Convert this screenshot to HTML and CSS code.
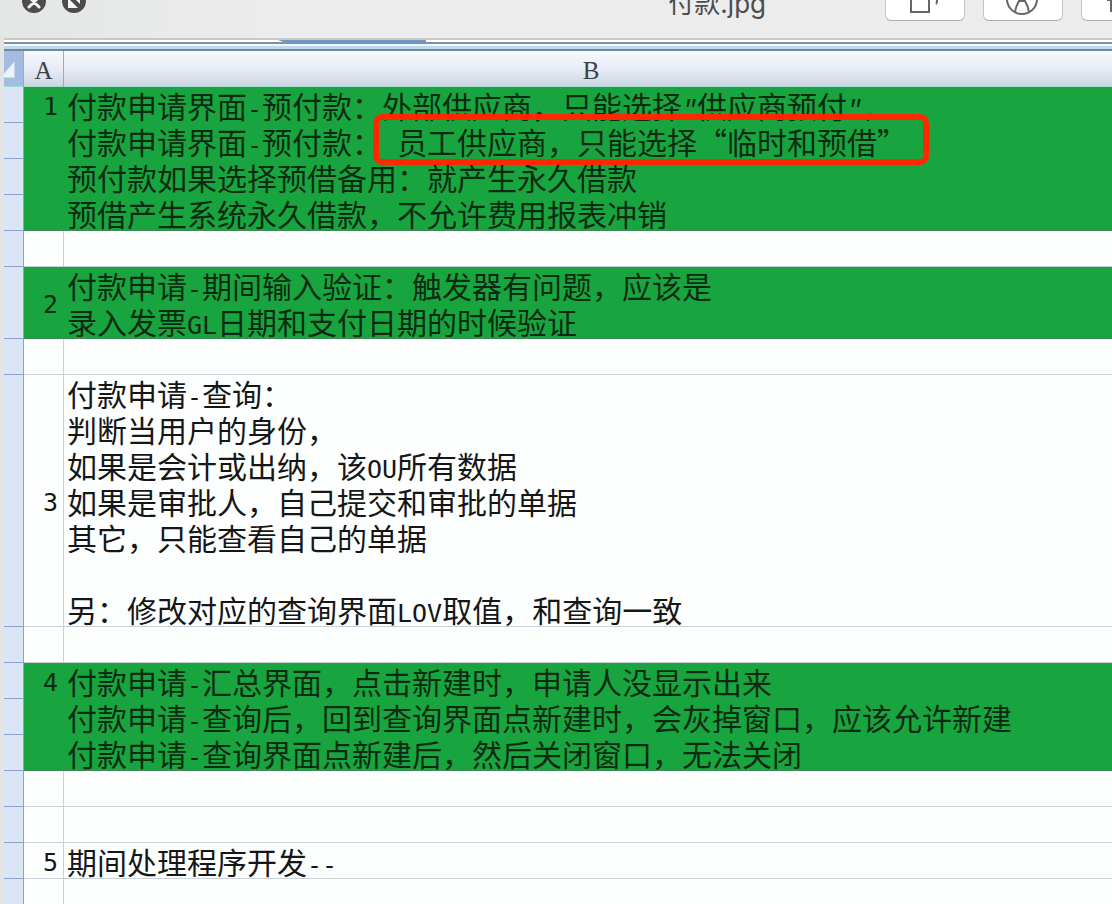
FILE: index.html
```html
<!DOCTYPE html>
<html lang="zh-CN">
<head>
<meta charset="utf-8">
<title>付款.jpg</title>
<link rel="stylesheet" href="styles.css">
</head>
<body>
<header class="toolbar">
  <div class="window-controls">
    <button class="round" aria-label="关闭"><svg viewBox="0 0 24 24"><circle cx="12" cy="12" r="12" fill="#4c4c4c"/><path d="M7 8l10 10M17 8L7 18" stroke="#f4f4f4" stroke-width="3" stroke-linecap="round"/></svg></button>
    <button class="round" aria-label="全屏"><svg viewBox="0 0 24 24"><circle cx="12" cy="12" r="12" fill="#4c4c4c"/><path d="M9 6h9v9zM6 9v10h10z" fill="#f4f4f4"/></svg></button>
  </div>
  <h1 class="title">付款.jpg</h1>
  <div class="tools">
    <button class="tool" aria-label="旋转"><svg viewBox="0 0 40 32"><path d="M6 6h18v19H6z M26 5h3q3 0 3 3v6q0 2-1 3" fill="none" stroke="#666" stroke-width="2"/></svg></button>
    <button class="tool" aria-label="标记"><svg viewBox="0 0 40 32"><circle cx="19" cy="12" r="15" fill="none" stroke="#666" stroke-width="2"/><path d="M12 25q1-6 4-11h6q3 5 4 11M16 14l3-9 3 9" fill="none" stroke="#666" stroke-width="2"/></svg></button>
    <button class="tool" aria-label="共享"><svg viewBox="0 0 40 32"><path d="M6 13h4v11h20V13" fill="none" stroke="#666" stroke-width="2"/></svg></button>
  </div>
</header>
<main class="sheet">
  <div class="ribbon"><span class="tab"></span></div>
  <table class="grid">
    <colgroup><col class="col-head"><col class="col-a"><col></colgroup>
    <thead>
      <tr><th class="corner"><svg viewBox="0 0 20 36"><path d="M11 10v17H0v-4z" fill="#eef3fb"/></svg></th><th>A</th><th>B</th></tr>
    </thead>
    <tbody>
      <tr class="green"><th></th><td>1</td><td>付款申请界面<i>-</i>预付款：外部供应商，只能选择<i class="slant">"</i>供应商预付<i class="slant">"</i><i>,</i></td></tr>
      <tr class="green"><th></th><td></td><td>付款申请界面<i>-</i>预付款：<i> </i><span class="marked">员工供应商，只能选择“临时和预借”</span></td></tr>
      <tr class="green"><th></th><td></td><td>预付款如果选择预借备用：就产生永久借款</td></tr>
      <tr class="green last"><th></th><td></td><td>预借产生系统永久借款，不允许费用报表冲销</td></tr>
      <tr><th></th><td></td><td></td></tr>
      <tr class="green last"><th></th><td>2</td><td>付款申请<i>-</i>期间输入验证：触发器有问题，应该是<br>录入发票<i>GL</i>日期和支付日期的时候验证</td></tr>
      <tr><th></th><td></td><td></td></tr>
      <tr><th></th><td>3</td><td>付款申请<i>-</i>查询：<br>判断当用户的身份，<br>如果是会计或出纳，该<i>OU</i>所有数据<br>如果是审批人，自己提交和审批的单据<br>其它，只能查看自己的单据<br><br>另：修改对应的查询界面<i>LOV</i>取值，和查询一致</td></tr>
      <tr><th></th><td></td><td></td></tr>
      <tr class="green"><th></th><td>4</td><td>付款申请<i>-</i>汇总界面，点击新建时，申请人没显示出来</td></tr>
      <tr class="green"><th></th><td></td><td>付款申请<i>-</i>查询后，回到查询界面点新建时，会灰掉窗口，应该允许新建</td></tr>
      <tr class="green last"><th></th><td></td><td>付款申请<i>-</i>查询界面点新建后，然后关闭窗口，无法关闭</td></tr>
      <tr><th></th><td></td><td></td></tr>
      <tr><th></th><td></td><td></td></tr>
      <tr><th></th><td>5</td><td>期间处理程序开发<i>--</i></td></tr>
      <tr><th></th><td></td><td></td></tr>
    </tbody>
  </table>
</main>
</body>
</html>
```
FILE: styles.css
```css
* { box-sizing: border-box; }
body {
  margin: 0;
  height: 100vh;
  overflow: hidden;
  background: #e2e4e4;
  font-family: "Noto Sans CJK SC", sans-serif;
}
button { padding: 0; border: 0; }
.toolbar {
  display: flex;
  align-items: flex-end;
  height: 38px;
  overflow: hidden;
  background: linear-gradient(90deg, #e4e6e6, #ececec 25%);
}
.window-controls {
  display: flex;
  gap: 16px;
  padding: 0 0 25px 22px;
}
.round { width: 24px; height: 24px; background: none; }
.round svg { display: block; }
.title {
  margin: 0 119px 21px auto;
  color: #4d4d4d;
  font: 400 26px/26px Inter, "Noto Sans CJK SC", sans-serif;
}
.tools {
  display: flex;
  flex: none;
  gap: 18px;
  margin: 0 -49px 17px 0;
}
.tool {
  width: 80px;
  height: 44px;
  border: 1px solid #c4c4c4;
  border-bottom-color: #aeaeae;
  border-radius: 6px;
  background: #fff;
}
.tool svg { display: block; width: 40px; height: 32px; margin: 8px auto 0; }

.sheet { margin-left: 4px; background: #fdfffe; }
.ribbon {
  height: 13px;
  border-top: 2px solid #c6cac4;
  background: linear-gradient(#fff 2px, #7c929f 2px 4px, #f2f8fa 4px 6px, #bcd8ef 6px 9px, #70899a 9px);
}
.tab {
  display: block;
  width: 148px;
  height: 3px;
  margin-left: 274px;
  background: #7397c0;
  clip-path: polygon(0 0, 100% 0, 100% 100%, 8px 100%);
}
.grid {
  --rule: #c9d0d8;
  width: 100%;
  table-layout: fixed;
  border-collapse: separate;
  border-spacing: 0;
  color: #161616;
  font-size: 30px;
  line-height: 36px;
}
.col-head { width: 20px; }
.col-a { width: 40px; }
.grid th, .grid td {
  height: 36px;
  padding: 0;
  border-right: 1px solid var(--rule);
  box-shadow: inset 0 -1px var(--rule);
  text-align: left;
  white-space: nowrap;
}
.grid tr > :last-child { border-right: 0; }
.grid td:last-child { padding-left: 3px; }
.grid td:nth-child(2) {
  padding: 4px 5px 0 0;
  text-align: right;
  font: 25px/32px "DejaVu Sans Mono", monospace;
}
.grid tbody th { --rule: #8ba3c7; background: #dae6f5; }
.grid thead th {
  padding-top: 4px;
  border-right-color: #9daabb;
  box-shadow: inset 0 -1px #a2dacb;
  background: linear-gradient(#f7fafd, #e7ebf5 50%, #cbd6e2);
  color: #3c4246;
  font: 25px/32px "Liberation Serif", serif;
  text-align: center;
}
.grid thead th:last-child { padding-left: 6px; }
.grid thead .corner { padding: 0; background: #a5bce2; }
.corner svg { display: block; width: 19px; height: 36px; }
.grid .green td { --rule: #18a53f; background: #18a53f; color: #0c2b12; }
.grid .last td { box-shadow: inset 0 -1px #3b8c55; }
i { font: 25px/1px "DejaVu Sans Mono", monospace; white-space: pre; }
.slant { font-family: "Liberation Mono", monospace; font-style: italic; }
.marked { position: relative; display: inline-block; }
.marked::after {
  content: "";
  position: absolute;
  inset: -9px -22px -6px -24px;
  border: 6px solid #ff2800;
  border-radius: 9px;
}
```
